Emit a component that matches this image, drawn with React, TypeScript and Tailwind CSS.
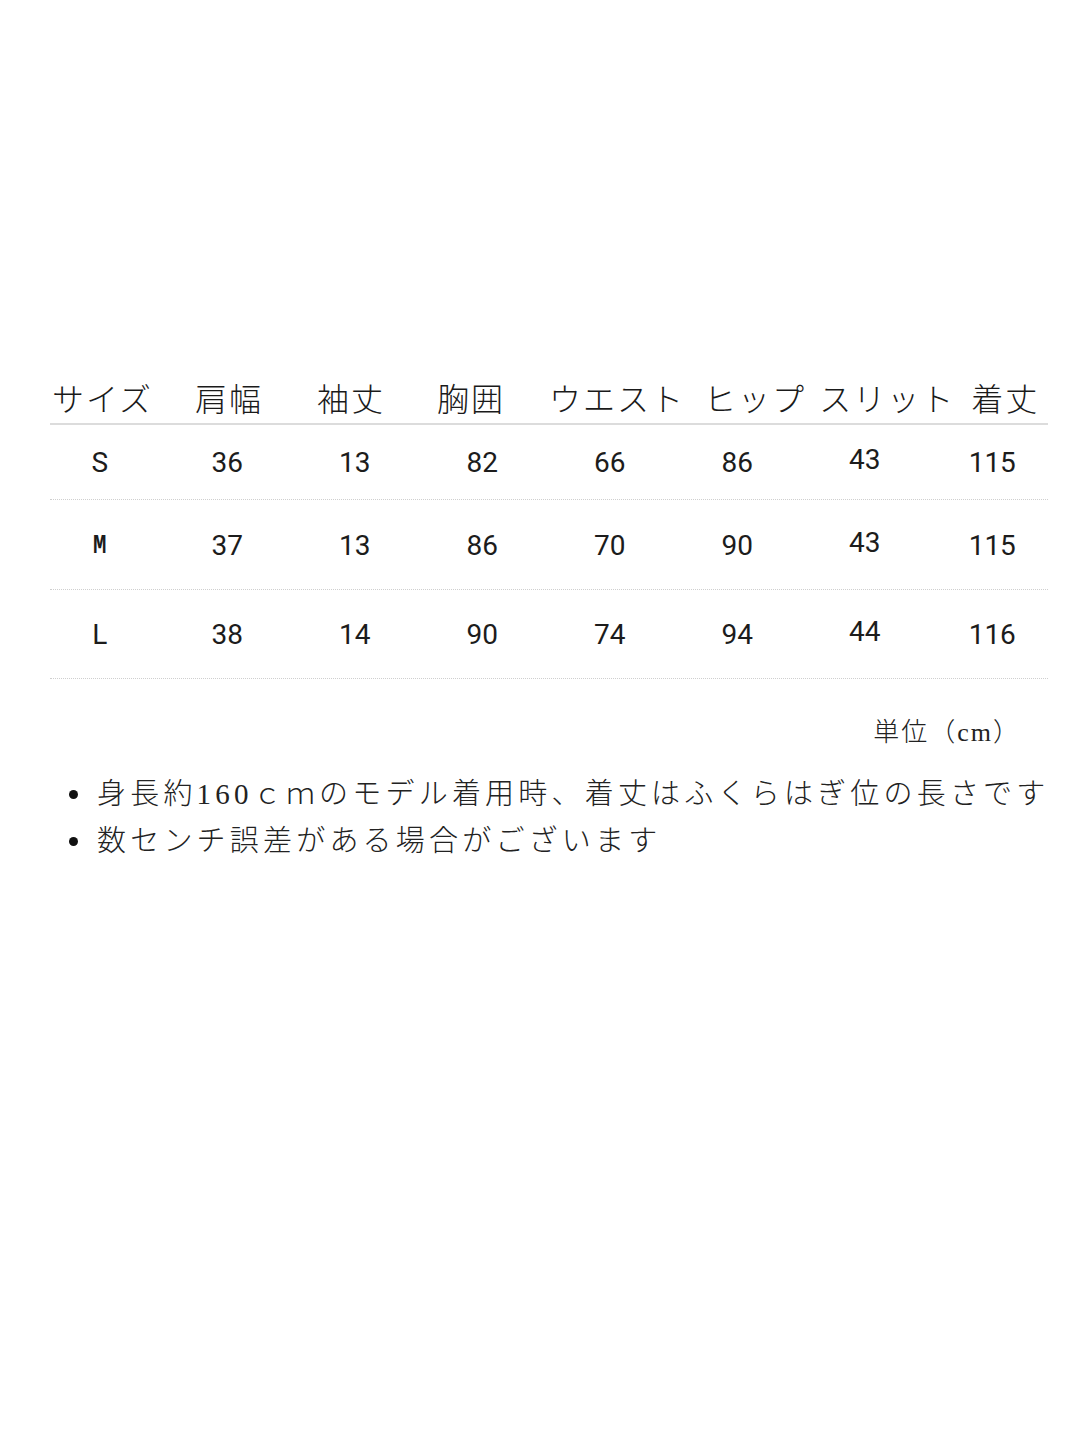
const HEADERS = [
  { label: 'サイズ', ml: 'ml-[2px]' },
  { label: '肩幅', ml: 'ml-[42px]' },
  { label: '袖丈', ml: 'ml-[54px]' },
  { label: '胸囲', ml: 'ml-[52px]' },
  { label: 'ウエスト', ml: 'ml-[44px]' },
  { label: 'ヒップ', ml: 'ml-[19px]' },
  { label: 'スリット', ml: 'ml-[13px]' },
  { label: '着丈', ml: 'ml-[16px]' },
]

const ROWS = [
  { size: 'S', sizeClass: 'font-["Roboto"] font-normal', h: 'h-[75px]', values: ['36', '13', '82', '66', '86', '43', '115'] },
  { size: 'M', sizeClass: 'font-["Liberation_Mono"] font-bold scale-x-[0.8]', h: 'h-[90px]', values: ['37', '13', '86', '70', '90', '43', '115'] },
  { size: 'L', sizeClass: 'font-["Roboto"] font-normal', h: 'h-[89px]', values: ['38', '14', '90', '74', '94', '44', '116'] },
]

const NOTES = [
  '身長約160ｃｍのモデル着用時、着丈はふくらはぎ位の長さです',
  '数センチ誤差がある場合がございます',
]

export default function App() {
  return (
    <div className="min-h-[1440px] w-[1080px] bg-white pt-[375px] text-[#111]">
      {/* header labels */}
      <div className="mx-[50px] flex h-[44px] items-center font-['Noto_Sans_CJK_JP',sans-serif] text-[32px] font-light leading-[44px] tracking-[2px] text-[#1a1a1a]">
        {HEADERS.map((h) => (
          <span key={h.label} className={`${h.ml} whitespace-nowrap`}>
            {h.label}
          </span>
        ))}
      </div>

      {/* table */}
      <div className="mx-[50px] mt-[4px] w-[998px] border-t-2 border-[#dcdcdc]">
        {ROWS.map((r) => (
          <div key={r.size} className={`${r.h} border-b border-dotted border-[#cfcfcf]`}>
            <div className="-ml-[14px] grid h-full grid-cols-[repeat(8,127.5px)] items-center pt-[2px] text-[28px] text-[#1c1c1c]">
              <span className={`text-center ${r.sizeClass}`}>{r.size}</span>
              {r.values.map((v, i) => (
                <span
                  key={i}
                  className={`text-center font-['Roboto',sans-serif] ${i === 5 ? '-translate-y-[3px]' : ''}`}
                >
                  {v}
                </span>
              ))}
            </div>
          </div>
        ))}
      </div>

      {/* unit */}
      <div className="mt-[36px] flex justify-end pr-[59px] font-['Liberation_Serif','Noto_Sans_CJK_JP',serif] text-[26px] font-light leading-[36px] tracking-[2px] text-[#222]">
        単位（cm）
      </div>

      {/* notes */}
      <ul className="mt-[20px] pl-[69px] font-['Liberation_Serif','Noto_Sans_CJK_JP',serif] text-[29px] font-light leading-[47px] tracking-[4.2px] text-[#222]">
        {NOTES.map((n) => (
          <li key={n} className="flex items-center whitespace-nowrap">
            <span className="mr-[19px] h-[9px] w-[9px] shrink-0 rounded-full bg-[#111]" />
            {n}
          </li>
        ))}
      </ul>
    </div>
  )
}
